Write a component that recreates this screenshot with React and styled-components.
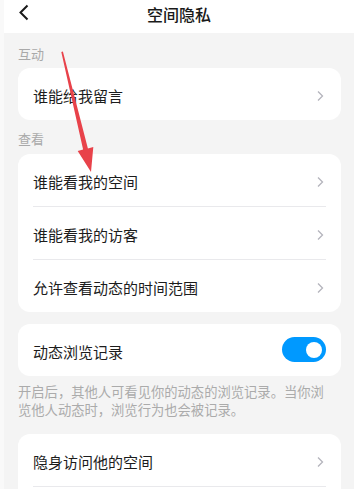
import React from "react";
import styled, { createGlobalStyle } from "styled-components";

const GlobalStyle = createGlobalStyle`
  html, body {
    margin: 0;
    padding: 0;
    background: #f4f4f4;
  }
  body {
    font-family: "Noto Sans CJK SC", "Noto Sans", sans-serif;
  }
`;

const Screen = styled.div`
  position: relative;
  width: 354px;
  height: 489px;
  overflow: hidden;
  display: flex;
  background: #f4f4f4;
`;

const Edge = styled.div`
  width: 4px;
  flex: none;
  background: #f9f9f9;
`;

const Main = styled.div`
  flex: 1;
  display: flex;
  flex-direction: column;
  & > * {
    flex: none;
  }
`;

const Header = styled.header`
  height: 33px;
  background: #fff;
  display: grid;
  grid-template-columns: 40px 1fr 40px;
  align-items: start;
`;

const Back = styled.div`
  display: flex;
  padding: 4px 0 0 14px;
`;

const Title = styled.h1`
  margin: 0;
  padding-top: 3px;
  text-align: center;
  font-size: 16px;
  font-weight: 500;
  color: #1a1a1a;
  line-height: 22px;
`;

const Body = styled.div`
  padding: 0 13px 0 14px;
  display: flex;
  flex-direction: column;
  & > * {
    flex: none;
  }
`;

const SectionLabel = styled.div`
  font-size: 13px;
  line-height: 18px;
  color: #a9a9a9;
  padding: ${(p) => p.$top}px 0 ${(p) => p.$bottom}px;
`;

const Card = styled.div`
  background: #fff;
  border-radius: 12px;
  padding: 0 15px;
  margin-top: ${(p) => p.$gap || 0}px;
`;

const Row = styled.div`
  height: 52px;
  display: flex;
  align-items: center;
  justify-content: space-between;
  font-size: 15px;
  color: #1c1c1c;
  padding-top: 3px;
  box-sizing: border-box;
  & + & {
    border-top: 1px solid #e9e9ec;
    height: 53px;
  }
`;

const Divider = styled.div`
  height: 1px;
  background: #e9e9ec;
`;

const Note = styled.p`
  margin: 0;
  padding: 7px 8px 15px 0;
  font-size: 13.3px;
  line-height: 18px;
  color: #ababab;
`;

const Toggle = styled.div`
  width: 44px;
  height: 25px;
  border-radius: 13px;
  background: #0099ff;
  display: flex;
  align-items: center;
  justify-content: flex-end;
  padding-right: 4px;
  box-sizing: border-box;
  margin-top: -4px;
`;

const Knob = styled.div`
  width: 16px;
  height: 16px;
  border-radius: 50%;
  background: #fff;
`;

const Arrow = styled.svg`
  position: absolute;
  left: 0;
  top: 0;
  pointer-events: none;
`;

const Chevron = () => (
  <svg width="10" height="12" viewBox="0 0 10 12" style={{ marginRight: 1 }}>
    <path d="M3 1.5 L7.5 6 L3 10.5" fill="none" stroke="#b4b4bc" strokeWidth="1.3" />
  </svg>
);

const Item = ({ label }) => (
  <Row>
    <span>{label}</span>
    <Chevron />
  </Row>
);

export default function App() {
  return (
    <>
      <GlobalStyle />
      <Screen>
        <Edge />
        <Main>
          <Header>
            <Back>
              <svg width="12" height="18" viewBox="0 0 12 18">
                <path d="M9.5 1.5 L2.5 8.5 L9.5 15.5" fill="none" stroke="#1a1a1a" strokeWidth="2" />
              </svg>
            </Back>
            <Title>空间隐私</Title>
            <span />
          </Header>
          <Body>
            <SectionLabel $top={12} $bottom={5}>互动</SectionLabel>
            <Card>
              <Item label="谁能给我留言" />
            </Card>
            <SectionLabel $top={10} $bottom={6}>查看</SectionLabel>
            <Card>
              <Item label="谁能看我的空间" />
              <Item label="谁能看我的访客" />
              <Item label="允许查看动态的时间范围" />
            </Card>
            <Card $gap={12}>
              <Row>
                <span>动态浏览记录</span>
                <Toggle>
                  <Knob />
                </Toggle>
              </Row>
            </Card>
            <Note>开启后，其他人可看见你的动态的浏览记录。当你浏览他人动态时，浏览行为也会被记录。</Note>
            <Card>
              <Item label="隐身访问他的空间" />
              <Divider />
              <Row />
            </Card>
          </Body>
        </Main>
        <Arrow width="354" height="489" viewBox="0 0 354 489">
          <polygon
            points="61.3,52 62.9,51.6 87.9,148.4 93.3,147.1 91,172 77.7,150.9 83.1,149.6"
            fill="#e8424a"
          />
        </Arrow>
      </Screen>
    </>
  );
}
